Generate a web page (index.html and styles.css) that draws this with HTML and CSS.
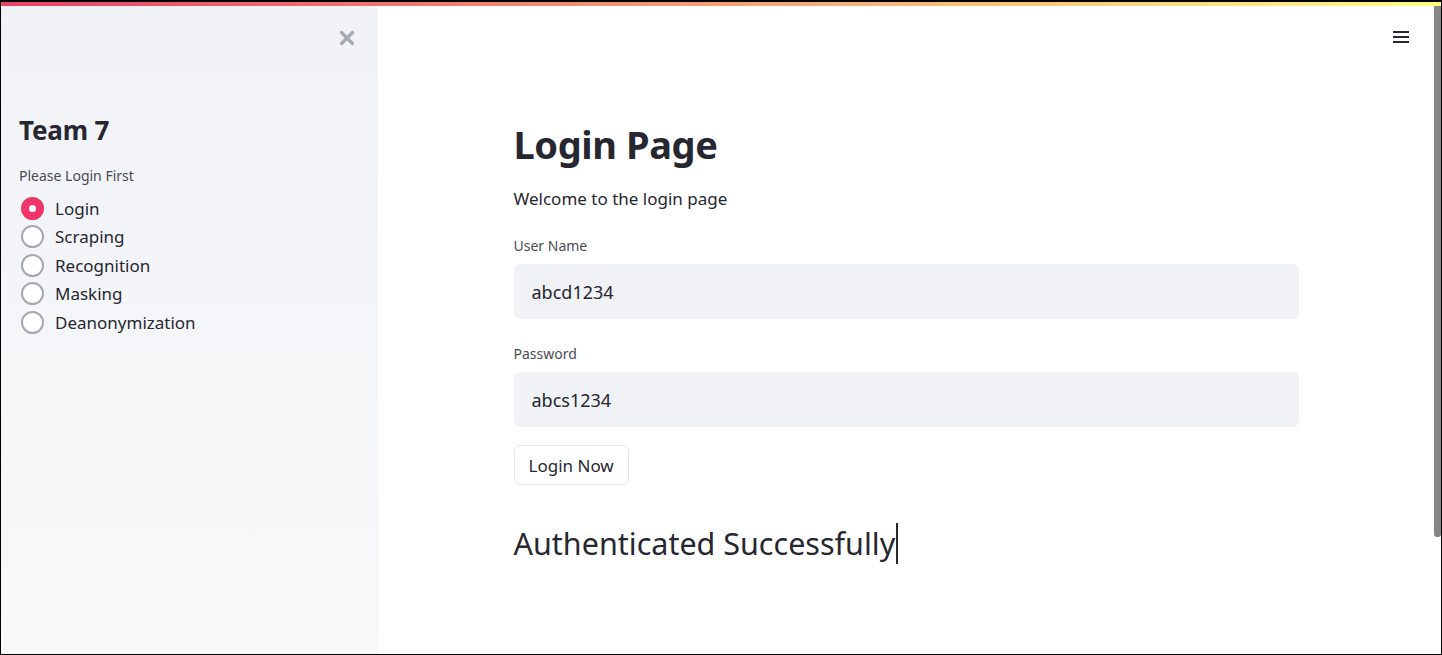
FILE: index.html
```html
<!DOCTYPE html>
<html lang="en">
<head>
<meta charset="utf-8">
<title>Login Page</title>
<link rel="stylesheet" href="styles.css">
</head>
<body>
<div class="frame">
  <div class="deco"></div>
  <div class="app">
    <aside class="sidebar">
      <div class="close-row">
        <button class="close" aria-label="Close sidebar">
          <svg width="16" height="16" viewBox="0 0 16 16"><path d="M2.5 2.5 L13.5 13.5 M13.5 2.5 L2.5 13.5" stroke="#a3a8b4" stroke-width="3.2" stroke-linecap="round"/></svg>
        </button>
      </div>
      <h2 class="side-title">Team 7</h2>
      <div class="radio-label">Please Login First</div>
      <div class="radios">
        <label class="radio checked"><span class="dot"></span><span>Login</span></label>
        <label class="radio"><span class="dot"></span><span>Scraping</span></label>
        <label class="radio"><span class="dot"></span><span>Recognition</span></label>
        <label class="radio"><span class="dot"></span><span>Masking</span></label>
        <label class="radio"><span class="dot"></span><span>Deanonymization</span></label>
      </div>
    </aside>
    <main class="main">
      <div class="topbar">
        <button class="menu" aria-label="Menu">
          <svg width="18" height="16" viewBox="0 0 18 16"><path d="M1 3 H17 M1 8 H17 M1 13 H17" stroke="#262730" stroke-width="2"/></svg>
        </button>
      </div>
      <div class="block">
        <h1 class="title">Login Page</h1>
        <p class="lead">Welcome to the login page</p>
        <div class="field">
          <div class="field-label">User Name</div>
          <div class="input">abcd1234</div>
        </div>
        <div class="field">
          <div class="field-label">Password</div>
          <div class="input">abcs1234</div>
        </div>
        <button class="btn">Login Now</button>
        <div class="result">Authenticated Successfully<span class="caret"></span></div>
      </div>
    </main>
    <div class="scrollbar"><div class="thumb"></div></div>
  </div>
</div>
</body>
</html>
```

FILE: styles.css
```css
* { box-sizing: border-box; }
html, body { margin: 0; padding: 0; background: #fff; }
body {
  font-family: "Noto Sans", "Open Sans", sans-serif;
  color: #262730;
}
.frame {
  width: 1442px;
  height: 655px;
  border: 1px solid #000;
  border-top-width: 2px;
  display: flex;
  flex-direction: column;
  overflow: hidden;
}
.deco {
  height: 4px;
  flex: none;
  background: linear-gradient(90deg, #e8436a, #fffd80);
}
.app {
  flex: 1;
  display: flex;
  min-height: 0;
}
.sidebar {
  width: 377px;
  flex: none;
  background: linear-gradient(180deg, #f0f2f6 0%, #f9f9fa 100%);
  padding: 0 18px;
  border-right: 1px solid #f4f4f6;
}
.close-row {
  display: flex;
  justify-content: flex-end;
  padding-top: 24px;
  padding-right: 4px;
}
.close {
  border: 0;
  background: none;
  padding: 0;
  width: 16px;
  height: 16px;
  display: flex;
}
.side-title {
  margin: 67px 0 0;
  font-size: 26px;
  font-weight: 700;
  line-height: 34px;
  letter-spacing: -0.2px;
}
.radio-label {
  margin-top: 19px;
  font-size: 14px;
  color: #494b55;
  line-height: 20px;
}
.radios {
  margin-top: 8px;
  display: flex;
  flex-direction: column;
}
.radio {
  display: flex;
  align-items: center;
  gap: 11px;
  height: 28.5px;
  font-size: 17px;
  padding-left: 2px;
}
.dot {
  width: 23px;
  height: 23px;
  border-radius: 50%;
  border: 2px solid #a6a8b0;
  background: #fff;
  flex: none;
}
.radio.checked .dot {
  border: 8px solid #f0346a;
  background: #fff;
}
.main {
  flex: 1;
  min-width: 0;
  background: #fff;
}
.topbar {
  display: flex;
  justify-content: flex-end;
  padding: 23px 24px 0 0;
  height: 60px;
}
.menu {
  border: 0;
  background: none;
  padding: 0;
  display: flex;
}
.block {
  width: 785px;
  margin: 0 auto;
  padding-top: 52px;
}
.title {
  margin: 0;
  font-size: 38px;
  font-weight: 700;
  line-height: 52px;
  letter-spacing: -0.4px;
}
.lead {
  margin: 16px 0 0;
  font-size: 17px;
  line-height: 26px;
}
.field { margin-top: 24px; }
.field + .field { margin-top: 25px; }
.field-label {
  font-size: 14px;
  line-height: 20px;
  color: #494b55;
  margin-bottom: 8px;
}
.input {
  height: 55px;
  background: #f0f2f6;
  border-radius: 6px;
  padding: 0 18px;
  display: flex;
  align-items: center;
  font-size: 18px;
}
.btn {
  margin-top: 18px;
  height: 40px;
  padding: 0 14px;
  border: 1px solid #e6e7ea;
  border-radius: 6px;
  background: #fff;
  font-family: inherit;
  font-size: 17px;
  color: #262730;
  display: flex;
  align-items: center;
}
.result {
  margin-top: 36px;
  font-size: 30.5px;
  line-height: 44px;
  font-weight: 400;
  display: flex;
  align-items: center;
}
.caret {
  width: 2px;
  height: 41px;
  background: #262730;
  margin-left: 1px;
}
.scrollbar {
  width: 7px;
  flex: none;
  background: #fff;
}
.thumb {
  height: 531px;
  background: #878787;
  border-radius: 0 0 3px 3px;
}
```
